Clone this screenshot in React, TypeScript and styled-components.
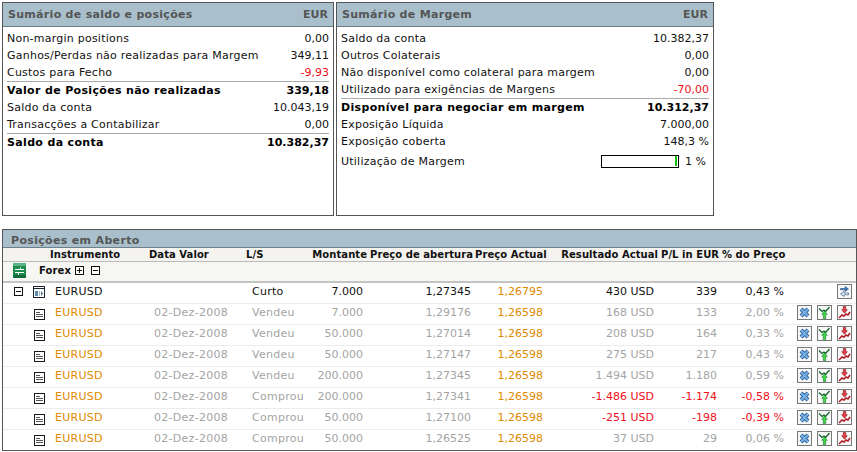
import React from 'react';
import styled, { createGlobalStyle } from 'styled-components';

const GlobalStyle = createGlobalStyle`
    html, body {
        margin: 0;
        padding: 0;
        background: #fff;
        font-family: "DejaVu Sans", Verdana, sans-serif;
        font-size: 11px;
        color: #111;
    }
`;

interface ISummaryRow {
    label: string;
    value: string;
    bold?: boolean;
    red?: boolean;
}

const saldoRows: ISummaryRow[] = [
    { label: 'Non-margin positions', value: '0,00' },
    { label: 'Ganhos/Perdas não realizadas para Margem', value: '349,11' },
    { label: 'Custos para Fecho', value: '-9,93', red: true },
    { label: 'Valor de Posições não realizadas', value: '339,18', bold: true },
    { label: 'Saldo da conta', value: '10.043,19' },
    { label: 'Transacções a Contabilizar', value: '0,00' },
    { label: 'Saldo da conta', value: '10.382,37', bold: true },
];

const margemRows: ISummaryRow[] = [
    { label: 'Saldo da conta', value: '10.382,37' },
    { label: 'Outros Colaterais', value: '0,00' },
    { label: 'Não disponível como colateral para margem', value: '0,00' },
    { label: 'Utilizado para exigências de Margens', value: '-70,00', red: true },
    { label: 'Disponível para negociar em margem', value: '10.312,37', bold: true },
    { label: 'Exposição Líquida', value: '7.000,00' },
    { label: 'Exposição coberta', value: '148,3 %' },
];

interface IPosition {
    date: string;
    side: string;
    amount: string;
    open: string;
    result: string;
    pl: string;
    pct: string;
    loss?: boolean;
}

const positions: IPosition[] = [
    { date: '02-Dez-2008', side: 'Vendeu', amount: '7.000', open: '1,29176', result: '168 USD', pl: '133', pct: '2,00 %' },
    { date: '02-Dez-2008', side: 'Vendeu', amount: '50.000', open: '1,27014', result: '208 USD', pl: '164', pct: '0,33 %' },
    { date: '02-Dez-2008', side: 'Vendeu', amount: '50.000', open: '1,27147', result: '275 USD', pl: '217', pct: '0,43 %' },
    { date: '02-Dez-2008', side: 'Vendeu', amount: '200.000', open: '1,27345', result: '1.494 USD', pl: '1.180', pct: '0,59 %' },
    { date: '02-Dez-2008', side: 'Comprou', amount: '200.000', open: '1,27341', result: '-1.486 USD', pl: '-1.174', pct: '-0,58 %', loss: true },
    { date: '02-Dez-2008', side: 'Comprou', amount: '50.000', open: '1,27100', result: '-251 USD', pl: '-198', pct: '-0,39 %', loss: true },
    { date: '02-Dez-2008', side: 'Comprou', amount: '50.000', open: '1,26525', result: '37 USD', pl: '29', pct: '0,06 %' },
];

const ToggleBox = ({ minus }: { minus?: boolean }) => (
    <svg width="9" height="9" viewBox="0 0 9 9">
        <rect x="0.5" y="0.5" width="8" height="8" fill="#fff" stroke="#111" />
        <path d="M2 4.5h5" stroke="#111" />
        {!minus && <path d="M4.5 2v5" stroke="#111" />}
    </svg>
);

const GroupIcon = () => (
    <svg width="13" height="15" viewBox="0 0 13 15">
        <rect width="13" height="15" rx="1.5" fill="#1d8a4e" />
        <rect width="13" height="3" rx="1" fill="#58b384" />
        <rect y="12" width="13" height="3" rx="1" fill="#126b3a" />
        <path d="M2 6.5h9M2 9.5h9" stroke="#fff" />
        <path d="M7.5 4.5v2M5.5 10v2" stroke="#fff" />
    </svg>
);

const ParentIcon = () => (
    <svg width="12" height="12" viewBox="0 0 12 12">
        <rect x="0.5" y="0.5" width="11" height="11" fill="#fff" stroke="#1a2433" />
        <path d="M0.5 2.5h11" stroke="#1a2433" />
        <path d="M2 5h3v5H2z" fill="#5f86ad" />
        <path d="M6 5h1v5H6z" fill="#9db7cf" />
        <path d="M8 5l2 2.5L8 10z" fill="#47709a" />
    </svg>
);

const DocIcon = () => (
    <svg width="11" height="11" viewBox="0 0 11 11">
        <rect x="0.5" y="0.5" width="10" height="10" fill="#fff" stroke="#1a1a1a" />
        <path d="M2 3.5h4M2 5.5h7M2 7.5h7" stroke="#555" />
    </svg>
);

const SwapIcon = () => (
    <svg width="13" height="13" viewBox="0 0 13 13">
        <path d="M2.5 3.5H7V1.5l3.5 2.5L7 6.5V4.8H2.5z" fill="#3f79bd" stroke="#234e80" strokeWidth="0.6" />
        <path d="M10.5 8H6V6.5L2.5 9 6 11.5V9.8h4.5z" fill="#e6eef7" stroke="#234e80" strokeWidth="0.6" />
    </svg>
);

const CloseIcon = () => (
    <svg width="13" height="13" viewBox="0 0 13 13">
        <path d="M3 3l7 7M10 3l-7 7" stroke="#2f5d8e" strokeWidth="4" />
        <path d="M3 3l7 7M10 3l-7 7" stroke="#74aee6" strokeWidth="2.4" />
    </svg>
);

const UpIcon = () => (
    <svg width="13" height="13" viewBox="0 0 13 13">
        <path d="M1 2.5l3 3 2-1.5 1.5 1.5L11.5 1" fill="none" stroke="#14602a" strokeWidth="1.3" />
        <path d="M6.5 5l2.8 3.3H7.7V12.5H5.3V8.3H3.7z" fill="#3bdc42" stroke="#14782c" strokeWidth="0.6" />
    </svg>
);

const DownIcon = () => (
    <svg width="13" height="13" viewBox="0 0 13 13">
        <path d="M1 12l3-3 2 1 2-2 2 1 2-3" fill="none" stroke="#b11a24" strokeWidth="1.5" />
        <path d="M5.3 0.5h2.4V3.7h1.6L6.5 7.2 3.7 3.7h1.6z" fill="#ee3b42" stroke="#7a1218" strokeWidth="0.6" />
    </svg>
);

const SummaryRows = ({ rows }: { rows: ISummaryRow[] }) => (
    <>
        {rows.map((row, i) => (
            <SummaryLine key={i} $bold={row.bold}>
                <SummaryLabel $bold={row.bold}>{row.label}</SummaryLabel>
                <SummaryValue $red={row.red}>{row.value}</SummaryValue>
            </SummaryLine>
        ))}
    </>
);

export default function App() {
    return (
        <>
            <GlobalStyle />
            <Page>
                <TopRow>
                    <SaldoPanel>
                        <PanelTitle>
                            <PanelName>Sumário de saldo e posições</PanelName>
                            <span>EUR</span>
                        </PanelTitle>
                        <SummaryBody>
                            <SummaryRows rows={saldoRows} />
                        </SummaryBody>
                    </SaldoPanel>
                    <MargemPanel>
                        <PanelTitle>
                            <PanelName>Sumário de Margem</PanelName>
                            <span>EUR</span>
                        </PanelTitle>
                        <SummaryBody>
                            <SummaryRows rows={margemRows} />
                            <UsageLine>
                                <SummaryLabel>Utilização de Margem</SummaryLabel>
                                <UsageBar><UsageFill /></UsageBar>
                                <UsageText>1 %</UsageText>
                            </UsageLine>
                        </SummaryBody>
                    </MargemPanel>
                </TopRow>

                <PositionsPanel>
                    <PositionsTitle>Posições em Aberto</PositionsTitle>
                    <HeaderRow>
                        <span />
                        <span>Instrumento</span>
                        <span>Data Valor</span>
                        <span>L/S</span>
                        <HeaderRight>Montante</HeaderRight>
                        <HeaderPad>Preço de abertura</HeaderPad>
                        <span>Preço Actual</span>
                        <HeaderRight>Resultado Actual</HeaderRight>
                        <HeaderPad>P/L in EUR</HeaderPad>
                        <span>% do Preço</span>
                    </HeaderRow>
                    <GroupRow>
                        <GroupIcon />
                        <GroupName>Forex</GroupName>
                        <ToggleBox />
                        <ToggleBox minus />
                    </GroupRow>
                    <DataRow $parent>
                        <TreeCell>
                            <ToggleBox minus />
                            <ParentIcon />
                        </TreeCell>
                        <TextCell>EURUSD</TextCell>
                        <span />
                        <TextCell>Curto</TextCell>
                        <NumCell>7.000</NumCell>
                        <NumCell>1,27345</NumCell>
                        <PriceCell>1,26795</PriceCell>
                        <NumCell>430 USD</NumCell>
                        <NumCell>339</NumCell>
                        <NumCell>0,43 %</NumCell>
                        <ActionCell>
                            <ActionButton><SwapIcon /></ActionButton>
                        </ActionCell>
                    </DataRow>
                    {positions.map((p, i) => (
                        <DataRow key={i} $muted>
                            <ChildTree><DocIcon /></ChildTree>
                            <InstrumentLink>EURUSD</InstrumentLink>
                            <TextCell>{p.date}</TextCell>
                            <TextCell>{p.side}</TextCell>
                            <NumCell>{p.amount}</NumCell>
                            <NumCell>{p.open}</NumCell>
                            <PriceCell>1,26598</PriceCell>
                            <NumCell $loss={p.loss}>{p.result}</NumCell>
                            <NumCell $loss={p.loss}>{p.pl}</NumCell>
                            <NumCell $loss={p.loss}>{p.pct}</NumCell>
                            <ActionCell>
                                <ActionButton><CloseIcon /></ActionButton>
                                <ActionButton><UpIcon /></ActionButton>
                                <ActionButton><DownIcon /></ActionButton>
                            </ActionCell>
                        </DataRow>
                    ))}
                </PositionsPanel>
            </Page>
        </>
    );
}

const Page = styled.div`
    width: 857px;
    height: 452px;
    padding: 2px 0 0 2px;
    box-sizing: border-box;
    overflow: hidden;
`;

const TopRow = styled.div`
    display: flex;
    gap: 2px;
`;

const Panel = styled.div`
    box-sizing: border-box;
    height: 214px;
    border: 1px solid #555;
    background: #fff;
`;

const SaldoPanel = styled(Panel)`
    width: 332px;
`;

const MargemPanel = styled(Panel)`
    width: 378px;
`;

const PanelTitle = styled.div`
    display: flex;
    justify-content: space-between;
    align-items: center;
    box-sizing: border-box;
    height: 24px;
    padding: 0 5px;
    background: #a9c0cc;
    border-bottom: 1px solid #6c7f8a;
    color: #555;
    font-weight: bold;
`;

const PanelName = styled.span`
    letter-spacing: 0.3px;
`;

const SummaryBody = styled.div`
    padding: 3px 4px 0 4px;
`;

const SummaryLine = styled.div<{ $bold?: boolean }>`
    display: flex;
    justify-content: space-between;
    align-items: center;
    box-sizing: border-box;
    height: ${p => (p.$bold ? '18px' : '17px')};
    ${p => p.$bold && `
        font-weight: bold;
        border-top: 1px solid #aaa;
        color: #000;
    `}
`;

const SummaryLabel = styled.span<{ $bold?: boolean }>`
    letter-spacing: ${p => (p.$bold ? '0.34px' : '0.23px')};
`;

const SummaryValue = styled.span<{ $red?: boolean }>`
    color: ${p => (p.$red ? '#f01020' : 'inherit')};
`;

const UsageLine = styled.div`
    display: flex;
    align-items: center;
    height: 20px;
    margin-top: 1px;

    > span:first-child {
        flex: 1;
    }
`;

const UsageBar = styled.div`
    display: flex;
    justify-content: flex-end;
    align-items: center;
    box-sizing: border-box;
    width: 78px;
    height: 13px;
    border: 1px solid #000;
    padding-right: 1px;
`;

const UsageFill = styled.div`
    width: 2px;
    height: 10px;
    background: #12c412;
`;

const UsageText = styled.span`
    width: 30px;
    text-align: right;
    padding-right: 3px;
    box-sizing: border-box;
`;

const PositionsPanel = styled.div`
    box-sizing: border-box;
    width: 855px;
    height: 222px;
    margin-top: 13px;
    border: 1px solid #555;
    overflow: hidden;
`;

const PositionsTitle = styled.div`
    box-sizing: border-box;
    height: 18px;
    padding: 3px 0 0 8px;
    background: #a9c0cc;
    color: #555;
    font-weight: bold;
    line-height: 15px;
    letter-spacing: 0.33px;
    border-bottom: 1px solid #6c7f8a;
`;

const HeaderRow = styled.div`
    display: grid;
    grid-template-columns: 47px 99px 97px 50px 71px 108px 74px 109px 64px 1fr;
    box-sizing: border-box;
    height: 14px;
    padding-top: 1px;
    line-height: 12px;
    background: #f4f3ef;
    border-bottom: 1px solid #bbb;
    font-size: 10px;
    font-weight: bold;
    letter-spacing: 0.06px;
    white-space: nowrap;
`;

const HeaderRight = styled.span`
    text-align: right;
`;

const HeaderPad = styled.span`
    padding-left: 3px;
`;

const GroupRow = styled.div`
    display: flex;
    align-items: center;
    box-sizing: border-box;
    height: 21px;
    padding: 0 0 3px 10px;
    gap: 7px;
    background: #f6f6f3;
    border-bottom: 2px solid #c4c4c4;
`;

const GroupName = styled.span`
    width: 29px;
    margin-left: 6px;
    font-size: 10px;
    font-weight: bold;
    letter-spacing: 0.1px;
`;

const DataRow = styled.div<{ $parent?: boolean; $muted?: boolean }>`
    display: grid;
    grid-template-columns: 52px 99px 98px 50px 61px 108px 72px 111px 63px 67px 1fr;
    align-items: center;
    box-sizing: border-box;
    height: 21px;
    padding-bottom: 3px;
    border-bottom: 1px solid #ececec;
    color: ${p => (p.$muted ? '#a4a4a4' : '#111')};
    white-space: nowrap;
`;

const TreeCell = styled.div`
    display: flex;
    align-items: center;
    gap: 10px;
    padding-left: 11px;
`;

const ChildTree = styled.div`
    display: flex;
    padding: 3px 0 0 31px;
`;

const TextCell = styled.span`
    letter-spacing: 0.28px;
`;

const InstrumentLink = styled(TextCell)`
    color: #e08a00;
`;

const NumCell = styled.span<{ $loss?: boolean }>`
    text-align: right;
    color: ${p => (p.$loss ? '#f01020' : 'inherit')};
`;

const PriceCell = styled(NumCell)`
    color: #e08a00;
`;

const ActionCell = styled.div`
    display: flex;
    justify-content: flex-end;
    gap: 5px;
    padding-right: 4px;
`;

const ActionButton = styled.div`
    display: flex;
    align-items: center;
    justify-content: center;
    box-sizing: border-box;
    width: 15px;
    height: 15px;
    border: 1px solid #777;
    background: #f8f8f8;
`;
